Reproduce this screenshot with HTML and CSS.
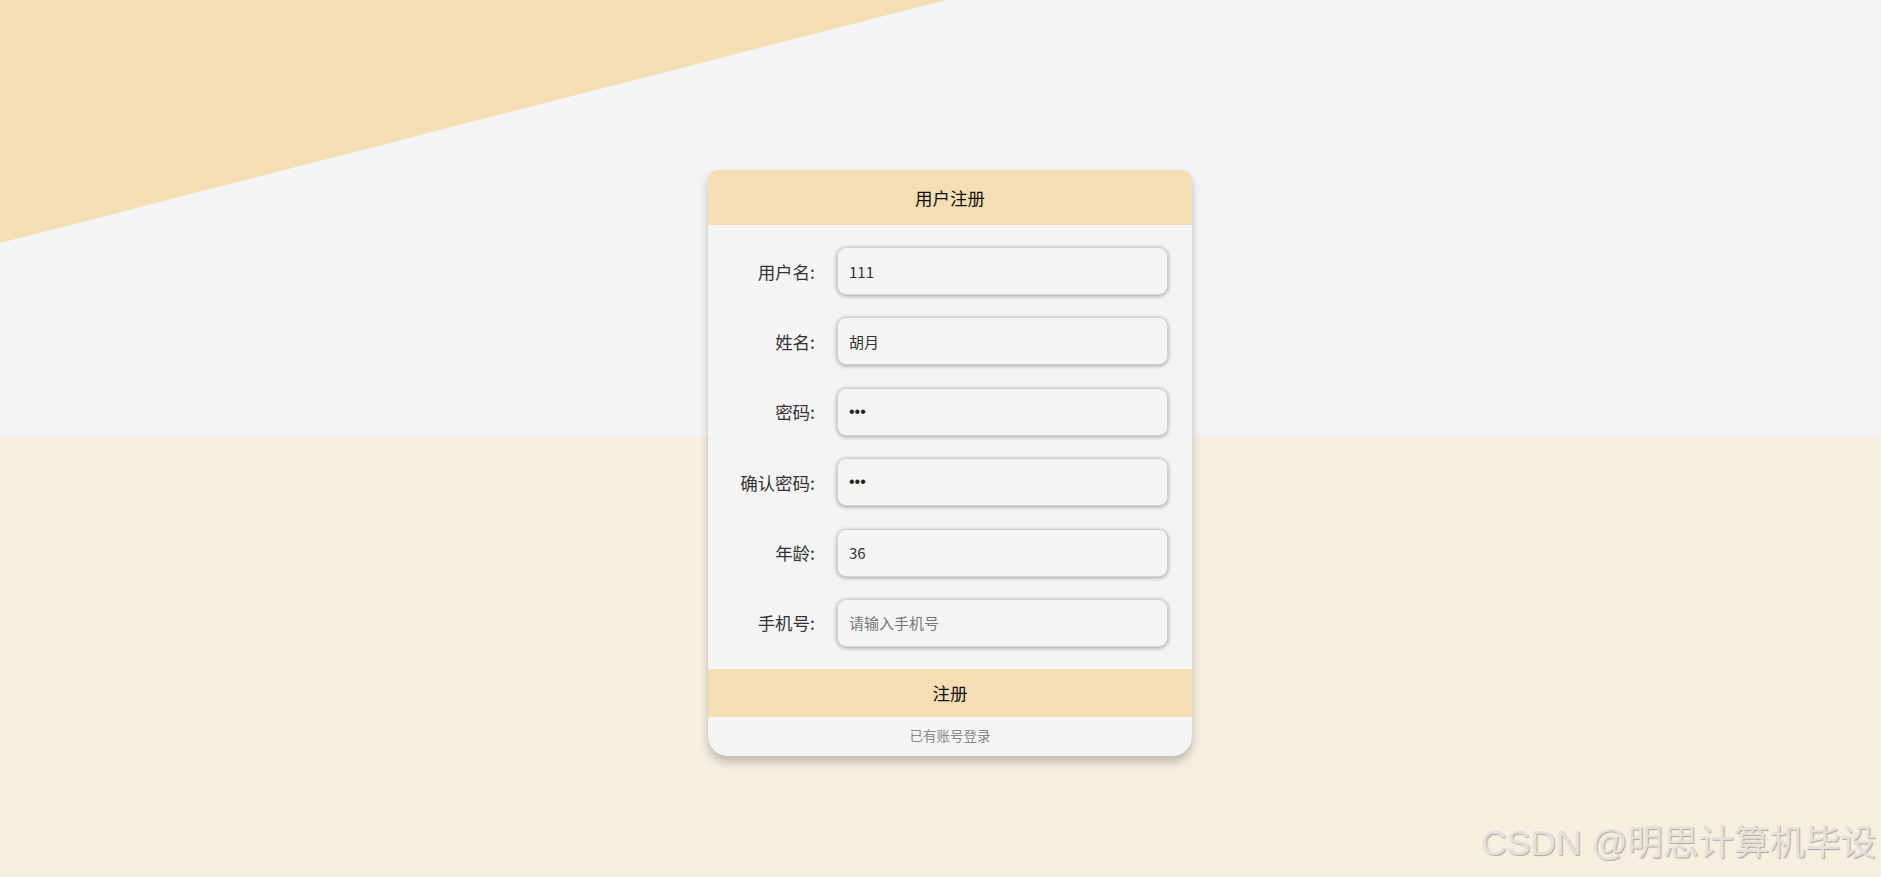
FILE: index.html
```html
<!DOCTYPE html>
<html lang="zh-CN">
<head>
    <meta charset="UTF-8">
    <title>用户注册</title>
    <link rel="stylesheet" href="styles.css">
</head>
<body>

<div class="page">
    <div class="card">
        <div class="card-header">用户注册</div>

        <form class="form">
            <label class="label" for="username">用户名:</label>
            <input class="field" id="username" type="text" value="111">

            <label class="label" for="realname">姓名:</label>
            <input class="field" id="realname" type="text" value="胡月">

            <label class="label" for="password">密码:</label>
            <input class="field" id="password" type="password" value="123">

            <label class="label" for="confirm">确认密码:</label>
            <input class="field" id="confirm" type="password" value="123">

            <label class="label" for="age">年龄:</label>
            <input class="field" id="age" type="text" value="36">

            <label class="label" for="phone">手机号:</label>
            <input class="field" id="phone" type="text" placeholder="请输入手机号">
        </form>

        <button class="submit" type="button">注册</button>
        <div class="card-footer">已有账号登录</div>
    </div>
</div>

<div class="watermark">CSDN @明思计算机毕设</div>

</body>
</html>
```

FILE: styles.css
```css
html, body {
    height: 100%;
}
body {
    margin: 0;
    font-family: "Noto Sans CJK SC", "Liberation Sans", sans-serif;
    background: linear-gradient(to bottom, #f4f4f4 0, #f4f4f4 437px, #f5efe0 437px, #f5efe0 100%);
    position: relative;
    overflow: hidden;
}
body::before {
    content: "";
    position: absolute;
    left: 0;
    top: 0;
    width: 946px;
    height: 243px;
    background: #f5deb3;
    clip-path: polygon(0 0, 100% 0, 0 100%);
}
.page {
    position: relative;
    display: flex;
    justify-content: center;
    padding: 170px 0 0 19px;
}
.card {
    width: 484px;
    background: #f4f4f4;
    border-radius: 10px 10px 20px 20px;
    box-shadow: 0 6px 10px rgba(0, 0, 0, 0.22);
    overflow: hidden;
}
.card-header {
    height: 55px;
    line-height: 55px;
    background: #f5deb3;
    text-align: center;
    font-size: 17.5px;
    color: #111;
}
.form {
    display: grid;
    grid-template-columns: 107px 331px;
    column-gap: 22px;
    row-gap: 22.4px;
    padding: 22px 24px 22px 0;
    margin: 0;
}
.label {
    text-align: right;
    align-self: center;
    font-size: 17.5px;
    color: #333;
}
.field {
    box-sizing: border-box;
    height: 48px;
    width: 100%;
    padding: 0 11px;
    border: 1px solid #d2d2d2;
    border-radius: 9px;
    background: #f4f4f4;
    box-shadow: 0 1px 4px rgba(0, 0, 0, 0.35);
    font-family: "Noto Sans CJK SC", "Liberation Sans", sans-serif;
    font-size: 15px;
    color: #333;
    outline: none;
}
.field::placeholder {
    color: #777;
}
.field[type="password"] {
    font-family: "Liberation Sans", sans-serif;
    font-size: 16px;
    color: #222;
}
.submit {
    display: block;
    width: 100%;
    height: 48px;
    border: none;
    background: #f5deb3;
    font-family: "Noto Sans CJK SC", "Liberation Sans", sans-serif;
    font-size: 17.5px;
    color: #111;
    cursor: pointer;
}
.card-footer {
    height: 39px;
    line-height: 36px;
    text-align: center;
    font-size: 13.5px;
    color: #888;
}
.watermark {
    position: absolute;
    right: 5px;
    bottom: 12px;
    font-family: "Liberation Sans", "Noto Sans CJK SC", sans-serif;
    font-size: 35.5px;
    color: #e4e1db;
    text-shadow: 1px 1px 1px #a9a7a2;
    white-space: nowrap;
}
```
